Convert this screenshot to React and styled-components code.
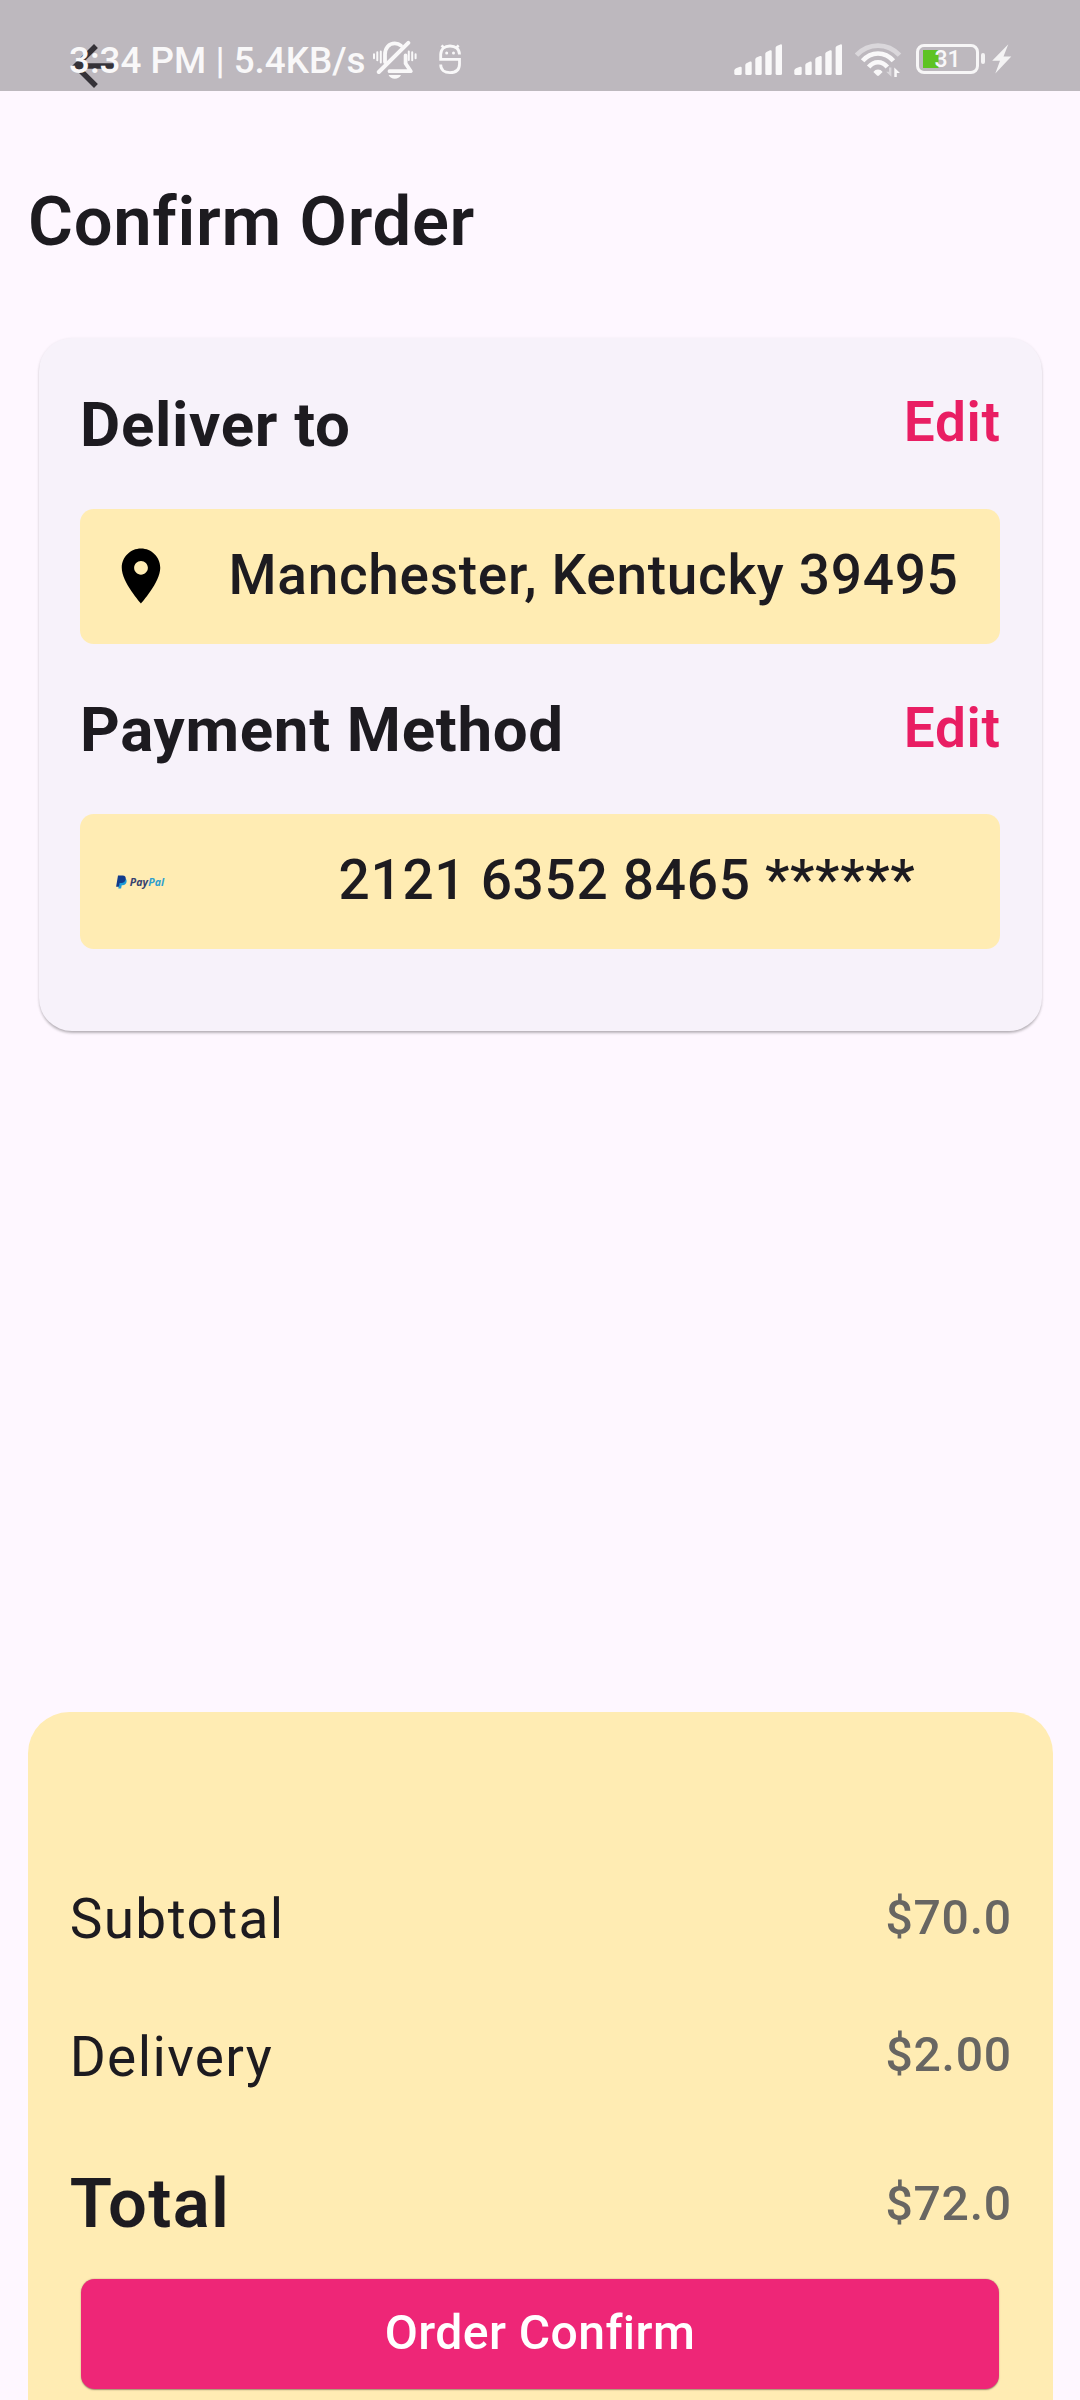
import React from "react";
import styled, { createGlobalStyle } from "styled-components";

const GlobalStyle = createGlobalStyle`
  body {
    margin: 0;
    background: #fef7ff;
  }
  * {
    box-sizing: border-box;
  }
`;

const Screen = styled.main`
  position: relative;
  display: flex;
  flex-direction: column;
  width: 1080px;
  height: 2400px;
  overflow: hidden;
  background: #fef7ff;
  color: #1d1b20;
  font-family: Roboto, "Noto Sans", sans-serif;
`;

const StatusBar = styled.header`
  display: flex;
  justify-content: space-between;
  flex: none;
  height: 91px;
  padding: 0 68px 0 69px;
  background: #bdb8be;
`;

const StatusGroup = styled.div`
  position: relative;
  z-index: 1;
  display: flex;
  align-items: flex-start;
`;

const Clock = styled.span`
  width: 303px;
  margin-top: 39px;
  font-size: 36.8px;
  font-weight: 500;
  line-height: 44px;
  white-space: nowrap;
  color: #f9f8f9;
`;

const StatusIcon = styled.svg`
  display: block;
  flex: none;
  margin-top: ${(p) => p.$top}px;
  margin-right: ${(p) => p.$gap || 0}px;
  fill: none;
  stroke-linecap: ${(p) => p.$cap || "butt"};
`;

const BatteryCase = styled.div`
  display: flex;
  align-items: center;
  justify-content: center;
  width: 63px;
  height: 30px;
  margin-top: 44px;
  padding-top: 1px;
  border: 3px solid #f7f6f7;
  border-radius: 8px;
  background: linear-gradient(#5ec322, #5ec322) 4px center / 15.5px 18px no-repeat;
  font-size: 23px;
  font-weight: 500;
  line-height: 24px;
  color: #f9f8f9;
`;

const BatteryTip = styled.div`
  width: 4px;
  height: 11px;
  margin: 53px 7px 0 2px;
  border-radius: 2px;
  background: #f4f3f4;
`;

const BackButton = styled.button`
  position: absolute;
  top: 33px;
  left: 61px;
  width: 66px;
  height: 66px;
  padding: 0;
  border: 0;
  background: none;
`;

const Title = styled.h1`
  flex: none;
  margin: 91px 28px 0;
  font-size: 68.75px;
  font-weight: 600;
  line-height: 80px;
  letter-spacing: 0.69px;
`;

const Card = styled.section`
  flex: none;
  height: 693px;
  margin: 76px 38.5px 0;
  padding: 50.7px 41.5px 0;
  border-radius: 33px;
  background: #f7f2fa;
  box-shadow: 0 3px 3px -1px rgba(0, 0, 0, 0.22), 0 1px 3px rgba(0, 0, 0, 0.13);
`;

const SectionHead = styled.div`
  display: flex;
  justify-content: space-between;
  height: 72px;
`;

const SectionTitle = styled.h2`
  margin: 0;
  font-size: 61.875px;
  font-weight: 700;
  line-height: 72px;
  letter-spacing: 0.69px;
`;

const EditLink = styled.a`
  margin: 1.7px -0.7px 0 0;
  font-size: 55px;
  font-weight: 600;
  line-height: 64px;
  letter-spacing: 0.69px;
  color: #e91e63;
`;

const DetailBox = styled.div`
  display: flex;
  align-items: center;
  gap: ${(p) => p.$gap}px;
  height: 134.75px;
  margin: 48.1px 0 50.7px;
  padding-left: 27.5px;
  border-radius: 13.75px;
  background: #ffecb3;
`;

const DetailIcon = styled.div`
  display: flex;
  flex: none;
  align-items: center;
  justify-content: center;
  width: 66px;
  height: 66px;
`;

const DetailText = styled.span`
  margin-bottom: 2.8px;
  font-size: 55px;
  font-weight: 500;
  line-height: 64px;
  letter-spacing: 0.69px;
  white-space: nowrap;
`;

const PayPalWord = styled.span`
  width: 35px;
  margin-left: 2.5px;
  font: italic 700 10.5px/14px "Open Sans", sans-serif;
  letter-spacing: 0.1px;
  color: #36406f;

  span {
    color: #2f9fce;
  }
`;

const Summary = styled.section`
  flex: none;
  height: 687.7px;
  margin: auto 27.5px 0;
  padding: 174.9px 41.25px 0;
  border-radius: 41.25px 41.25px 0 0;
  background: #ffecb3;
`;

const SummaryRow = styled.div`
  display: flex;
  justify-content: space-between;
  height: ${(p) => (p.$total ? 80 : 64)}px;
  margin-bottom: ${(p) => p.$after}px;
`;

const Label = styled.span`
  margin-left: 0.9px;
  font-size: ${(p) => (p.$total ? 68.75 : 55)}px;
  font-weight: ${(p) => (p.$total ? 600 : 400)};
  line-height: ${(p) => (p.$total ? 80 : 64)}px;
  letter-spacing: 1.375px;
`;

const Amount = styled.span`
  margin: ${(p) => (p.$total ? 11.8 : 2.6)}px -0.5px 0 0;
  font-size: 48.125px;
  font-weight: 500;
  line-height: 56px;
  letter-spacing: 0.69px;
  color: #686662;
`;

const ConfirmButton = styled.button`
  display: block;
  width: 918px;
  height: 109.7px;
  margin: 0 auto;
  padding: 0 0 3px;
  border: 0;
  border-radius: 13.75px;
  background: #ee2677;
  box-shadow: 0 0.5px 1.5px rgba(0, 0, 0, 0.4);
  font: 500 48.125px/56px Roboto, "Noto Sans", sans-serif;
  letter-spacing: 0.4px;
  color: #fff;
`;

const Signal = ({ gap }) => (
  <StatusIcon $top={44} $gap={gap} width="48" height="32" viewBox="0 0 48 32">
    <g fill="#f9f8f9">
      <path d="M.3 26.5Q.5 25 2 24.3L6 22.8Q7.7 22.4 7.7 24V29.5Q7.7 31 6.2 31H1.8Q.3 31 .3 29.5Z" />
      <path d="M11.3 21Q11.4 20 12.5 19.2L16 17.6Q17.7 17 17.7 18.7V29.5Q17.7 31 16.2 31H12.8Q11.3 31 11.3 29.5Z" />
      <path d="M21.3 15.5Q21.4 14.3 22.5 13.6L26 12Q27.7 11.5 27.7 13V29.5Q27.7 31 26.2 31H22.8Q21.3 31 21.3 29.5Z" />
      <path d="M31.3 9.8Q31.4 8.7 32.5 8L36 6.3Q37.7 5.8 37.7 7.3V29.5Q37.7 31 36.2 31H32.8Q31.3 31 31.3 29.5Z" />
      <path d="M41.6 3.8Q41.7 2.7 42.8 2L46.3.4Q48 0 48 1.5V29.5Q48 31 46.5 31H43.1Q41.6 31 41.6 29.5Z" />
    </g>
  </StatusIcon>
);

const SilentBell = () => (
  <StatusIcon $top={40} $gap={20} $cap="round" width="46" height="40" viewBox="0 0 46 40" stroke="#f9f8f9">
    <path d="M13 22V14.5C13 8 17 3.4 22.8 3.4C25.3 3.4 27.4 4.2 29 5.6" strokeWidth="3.8" />
    <path d="M33.6 15.5V23.5L38.8 31.2H17.5" strokeWidth="3.8" strokeLinejoin="round" />
    <path d="M36.3 2.8L6.8 32" strokeWidth="4" />
    <path d="M16.6 35H29Q27 38.8 22.8 38.8Q18.6 38.8 16.6 35Z" fill="#f9f8f9" stroke="none" />
    <path d="M2 14.3V18.3M5.3 12.3V20.3M8.8 11.5V22.5M36.8 11.5V20M40.2 12.3V20.3M43.6 14.3V18.3" strokeWidth="2" />
  </StatusIcon>
);

const SecurityS = () => (
  <StatusIcon $top={43} width="24" height="32" viewBox="0 0 24 32" stroke="#f9f8f9">
    <path d="M21.5 11.5C21.5 6 17.5 3 12 3S2.7 6 2.7 11.5V16.4H21.5V21C21.5 27 17.5 29.7 12 29.7S2.7 27 2.7 21.5" strokeWidth="2.8" />
    <path d="M6 5L3.6 2.4M18.2 5L20.6 2.4" strokeWidth="2.6" />
    <circle cx="8.7" cy="10" r="1.5" fill="#f9f8f9" stroke="none" />
    <circle cx="15.5" cy="10" r="1.5" fill="#f9f8f9" stroke="none" />
  </StatusIcon>
);

const Wifi = () => (
  <StatusIcon $top={42} $gap={14} width="47" height="36" viewBox="0 0 47 36" stroke="#f9f8f9">
    <path d="M1.5 13.2C13.5.4 32.5.4 44.5 13.2" strokeWidth="4.8" stroke="#dad7db" />
    <path d="M7.6 18.8C16 9 30 9 38.4 18.8" strokeWidth="4.6" />
    <path d="M13.7 25C18.8 18.6 27.2 18.6 32.3 25" strokeWidth="4.5" />
    <path d="M18.4 30C20.6 26.7 25.4 26.7 27.6 30L24 33.6Q23 34.4 22 33.6Z" fill="#f9f8f9" stroke="none" />
    <path d="M36.4 25.5V34.8L31.2 29.8H34V25.5Z" fill="#dad7db" stroke="none" />
    <path d="M39.3 35V25.5L45 31H41.8V35Z" fill="#f9f8f9" stroke="none" />
  </StatusIcon>
);

const Bolt = () => (
  <StatusIcon $top={44} width="20" height="30" viewBox="0 0 20 30">
    <path d="M16.3.3L.2 16.8H8L3.3 29.5L19.3 12.5H11.5Z" fill="#f4f3f4" />
  </StatusIcon>
);

const Pin = () => (
  <svg width="66" height="66" viewBox="0 0 24 24">
    <path d="M12 2C8.13 2 5 5.13 5 9c0 5.25 7 13 7 13s7-7.75 7-13c0-3.87-3.13-7-7-7zm0 9.5c-1.38 0-2.5-1.12-2.5-2.5s1.12-2.5 2.5-2.5 2.5 1.12 2.5 2.5-1.12 2.5-2.5 2.5z" />
  </svg>
);

const PayPal = () => (
  <>
    <svg width="11" height="14" viewBox="0 0 11 14">
      <path d="M4 3.5H9.3Q11 4.4 10.6 6.8Q9.9 10.2 6.6 10.2H5.7L5.1 13.5H2.3Z" fill="#1d9bd8" />
      <path d="M2 .5H6.6Q10.2.7 9.7 4.2Q9 7.9 5.3 7.9H3.7L2.9 11.7H.1Z" fill="#123b8c" />
    </svg>
    <PayPalWord>
      Pay<span>Pal</span>
    </PayPalWord>
  </>
);

export default function App() {
  return (
    <Screen>
      <GlobalStyle />
      <StatusBar>
        <StatusGroup>
          <Clock>3:34 PM | 5.4KB/s</Clock>
          <SilentBell />
          <SecurityS />
        </StatusGroup>
        <StatusGroup>
          <Signal gap={12} />
          <Signal gap={13} />
          <Wifi />
          <BatteryCase>31</BatteryCase>
          <BatteryTip />
          <Bolt />
        </StatusGroup>
      </StatusBar>
      <BackButton aria-label="Back">
        <svg width="66" height="66" viewBox="0 0 24 24">
          <path d="M20 11H7.83l5.59-5.59L12 4l-8 8 8 8 1.41-1.41L7.83 13H20v-2z" fill="#353238" />
        </svg>
      </BackButton>

      <Title>Confirm Order</Title>

      <Card>
        <SectionHead>
          <SectionTitle>Deliver to</SectionTitle>
          <EditLink>Edit</EditLink>
        </SectionHead>
        <DetailBox $gap={55}>
          <DetailIcon>
            <Pin />
          </DetailIcon>
          <DetailText>Manchester, Kentucky 39495</DetailText>
        </DetailBox>
        <SectionHead>
          <SectionTitle>Payment Method</SectionTitle>
          <EditLink>Edit</EditLink>
        </SectionHead>
        <DetailBox $gap={165}>
          <DetailIcon>
            <PayPal />
          </DetailIcon>
          <DetailText>2121 6352 8465 ******</DetailText>
        </DetailBox>
      </Card>

      <Summary>
        <SummaryRow $after={73.6}>
          <Label>Subtotal</Label>
          <Amount>$70.0</Amount>
        </SummaryRow>
        <SummaryRow $after={75}>
          <Label>Delivery</Label>
          <Amount>$2.00</Amount>
        </SummaryRow>
        <SummaryRow $total $after={35.4}>
          <Label $total>Total</Label>
          <Amount $total>$72.0</Amount>
        </SummaryRow>
        <ConfirmButton>Order Confirm</ConfirmButton>
      </Summary>
    </Screen>
  );
}
